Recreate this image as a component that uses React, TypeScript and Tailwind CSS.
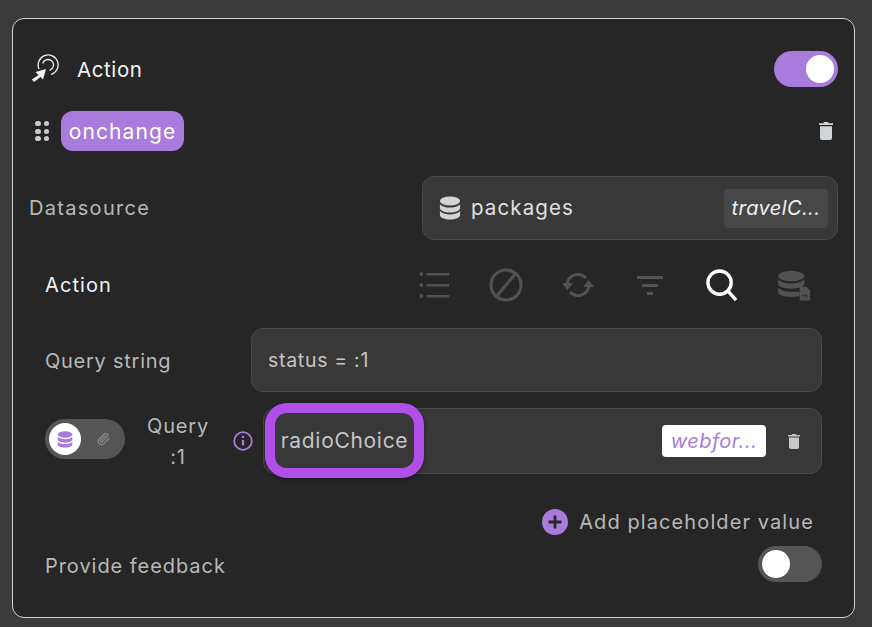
function DbIcon({ className }: { className?: string }) {
  return (
    <svg viewBox="0 0 24 24" className={className} fill="currentColor" preserveAspectRatio="none">
      <ellipse cx="12" cy="5" rx="11" ry="4.500" />
      <path d="M1 8.200C3 10.500 7.400 11.600 12 11.600s9-1.100 11-3.400V12c0 2.500-4.900 4.500-11 4.500S1 14.500 1 12z" />
      <path d="M1 15.100C3 17.400 7.400 18.500 12 18.500s9-1.100 11-3.400v3.900c0 2.500-4.900 4.500-11 4.500S1 21.500 1 19z" />
    </svg>
  );
}

function TrashIcon({ className }: { className?: string }) {
  return (
    <svg viewBox="0 0 14 18" className={className} fill="currentColor">
      <path d="M5 0h4l.6 1.200H14v1.800H0V1.200h4.400z" />
      <path d="M1 4.200h12V16a2 2 0 0 1-2 2H3a2 2 0 0 1-2-2z" />
    </svg>
  );
}

function ActionIcon() {
  return (
    <svg viewBox="0 0 30 30" className="w-[30px] h-[30px] text-[#f2f2f2]" fill="none" stroke="currentColor">
      <path d="M8 15A10 10 0 1 1 20 20.500" strokeWidth="1.300" />
      <path d="M11.700 9.500A5.500 5.500 0 1 1 18.500 16.300" strokeWidth="1.300" />
      <path d="M15 15 4.500 18l3 3-6.700 4.500L3 28l6.500-5 2.500 2.500z" fill="currentColor" stroke="none" />
    </svg>
  );
}

function Switch({ on }: { on: boolean }) {
  return (
    <div className={"w-16 h-9 rounded-full flex items-center px-1 " + (on ? "bg-[#a87bdd] justify-end" : "bg-[#555555] justify-start")}>
      <div className="w-7 h-7 rounded-full bg-white"></div>
    </div>
  );
}

export default function App() {
  return (
    <div className="w-[872px] h-[627px] bg-[#3a3a3a] pt-[18px] px-3 overflow-hidden font-['Inter',sans-serif]">
      <div className="w-[843px] h-[600px] bg-[#262626] border border-[#d4d4d4] rounded-xl pl-4 pr-4 relative">
        {/* Cabecera */}
        <div className="flex items-center justify-between h-9 mt-[32px] pl-[2px] pr-0">
          <div className="flex items-center gap-[16px]">
            <ActionIcon />
            <span className="text-[20.5px] tracking-[0.6px] text-[#f2f2f2] pt-[2px]">Action</span>
          </div>
          <Switch on />
        </div>

        {/* Evento */}
        <div className="flex items-center justify-between mt-[24px] h-10">
          <div className="flex items-center gap-[12px] pl-[6px]">
            <div className="grid grid-cols-2 gap-x-[3px] gap-y-[2.500px]">
              {[0, 1, 2, 3, 4, 5].map((i) => (
                <span key={i} className="w-[5.500px] h-[5px] rounded-full bg-[#cccccc]"></span>
              ))}
            </div>
            <div className="h-10 w-[123px] rounded-xl bg-[#a87bdd] text-white flex items-center justify-center text-[21px] tracking-[1.100px] pt-[2px]">onchange</div>
          </div>
          <TrashIcon className="w-[14px] h-[18px] text-[#d1d5db] mr-[5px]" />
        </div>

        {/* Datasource */}
        <div className="flex items-center justify-between mt-[25px]">
          <span className="text-[20px] tracking-[1.300px] text-[#b8b8b8]">Datasource</span>
          <div className="w-[416px] h-[64px] rounded-xl bg-[#383838] border border-[#4a4a4a] flex items-center justify-between pl-4 pr-[9px]">
            <div className="flex items-center gap-[10px]">
              <DbIcon className="w-[22px] h-[24px] text-[#d4d4d4]" />
              <span className="text-[20.500px] tracking-[1.100px] text-[#e0e0e0]">packages</span>
            </div>
            <div className="w-[104px] h-[39px] rounded bg-[#474747] flex items-center justify-center text-[20px] tracking-[0.400px] italic text-[#f0f0f0]">travelC...</div>
          </div>
        </div>

        {/* Action */}
        <div className="flex items-center justify-between mt-[27px] pl-4 pr-[27px] h-[36px]">
          <span className="text-[20px] tracking-[1.100px] text-[#f2f2f2]">Action</span>
          <div className="flex items-center text-[#525252]">
            <svg viewBox="0 0 34 30" className="w-[32px] h-[30px] mr-[40px]" fill="currentColor" preserveAspectRatio="none">
              <circle cx="3.500" cy="4" r="2" /><rect x="9" y="3" width="24" height="2.500" />
              <circle cx="3.500" cy="15" r="2" /><rect x="9" y="14" width="24" height="2.500" />
              <circle cx="3.500" cy="26" r="2" /><rect x="9" y="25" width="24" height="2.500" />
            </svg>
            <svg viewBox="0 0 34 34" className="w-[34px] h-[34px] mr-[39px] -ml-[1px]" fill="none" stroke="currentColor" strokeWidth="3">
              <circle cx="17" cy="17" r="15" /><path d="M7 29 27 5" />
            </svg>
            <svg viewBox="0 0 32 28" className="w-[32px] h-[28px] mr-[42px]" fill="none" stroke="currentColor" strokeWidth="3">
              <path d="M5 14A11 11 0 0 1 24 7" /><path d="M27 14A11 11 0 0 1 8 21" />
              <path d="M0 12h11l-5.500 7zM32 16H21l5.500-7z" fill="currentColor" stroke="none" />
            </svg>
            <svg viewBox="0 0 28 24" className="w-[28px] h-[24px] mr-[41px]" fill="currentColor">
              <rect x="1" y="3" width="26" height="3" /><rect x="6" y="11" width="16" height="3" /><rect x="11" y="19" width="6" height="3" />
            </svg>
            <svg viewBox="0 0 34 34" className="w-[33px] h-[33px] text-white mr-[39px]" fill="none" stroke="currentColor" strokeWidth="3.500">
              <circle cx="15" cy="14" r="12" /><path d="m24 23 8 9" />
            </svg>
            <svg viewBox="0 0 36 32" className="w-[34px] h-[31px]" fill="currentColor">
              <ellipse cx="15" cy="6" rx="14" ry="5.500" />
              <path d="M1 9.500c2.500 3 8 4.500 14 4.500s11.500-1.500 14-4.500V14c0 3-6.300 5.500-14 5.500S1 17 1 14z" />
              <path d="M1 18c2.500 3 8 4.500 14 4.500h9V27c-3 .6-6 1-9 1-7.700 0-14-2.500-14-5.500z" />
              <path d="M25 17h6l4 4v10a1 1 0 0 1-1 1h-9a1 1 0 0 1-1-1V18a1 1 0 0 1 1-1z" />
              <path d="M26 27h6m-2-2 2 2-2 2" fill="none" stroke="#262626" strokeWidth="1" />
            </svg>
          </div>
        </div>

        {/* Query string */}
        <div className="flex items-center justify-between mt-[25px] pl-4 pr-4">
          <span className="text-[20px] tracking-[0.750px] text-[#b8b8b8] pt-[2px]">Query string</span>
          <div className="w-[571px] h-[64px] rounded-xl bg-[#383838] border border-[#4a4a4a] flex items-center pl-4 pt-[2px] text-[19.500px] tracking-[0.700px] text-[#c4c4c4]">status = :1</div>
        </div>

        {/* Query :1 */}
        <div className="flex items-center mt-[16px] pl-4 pr-4">
          <div className="w-20 h-10 rounded-full bg-[#555555] flex items-center justify-between pl-[4px] pr-[14px] shrink-0 mb-[4px]">
            <div className="w-8 h-8 rounded-full bg-white flex items-center justify-center">
              <DbIcon className="w-[16px] h-[17px] text-[#a87bdd]" />
            </div>
            <svg viewBox="0 0 24 24" className="w-[14px] h-[14px] text-[#8a8a8a]" fill="none" stroke="currentColor" strokeWidth="2">
              <path d="m21 11-9 9a5.500 5.500 0 0 1-8-8l9-9a3.600 3.600 0 0 1 5 5l-9 9a1.800 1.800 0 0 1-2.500-2.500l8.500-8.500" />
            </svg>
          </div>
          <div className="w-[108px] text-center text-[20px] leading-[31px] tracking-[0.800px] text-[#b8b8b8] shrink-0 -ml-[1px] pt-[1px]">Query<br />:1</div>
          <svg viewBox="0 0 20 20" className="w-[20px] h-[20px] text-[#a87bdd] shrink-0 ml-[1px]" fill="none" stroke="currentColor" strokeWidth="1.800">
            <circle cx="10" cy="10" r="8.800" />
            <path d="M10 9v5.500" strokeWidth="2.200" />
            <circle cx="10" cy="6" r="1.300" fill="currentColor" stroke="none" />
          </svg>
          <div className="ml-[10px] w-[559px] h-[66px] rounded-xl bg-[#383838] border border-[#4a4a4a] flex items-center justify-between pr-[21px] relative">
            <div className="absolute left-[1px] -top-[6px] w-[159px] h-[75px] rounded-[22px] border-[10px] border-[#b14fea] bg-[#383838] flex items-center justify-center text-[21px] tracking-[0.700px] text-[#c4c4c4] shadow-[0_1px_4px_rgba(0,0,0,0.5)]">radioChoice</div>
            <div className="ml-auto flex items-center gap-[22px]">
              <div className="w-[104px] h-[32px] rounded bg-white flex items-center justify-center text-[20px] tracking-[0.500px] italic text-[#a87bdd]">webfor...</div>
              <TrashIcon className="w-[12px] h-[15px] text-[#c8c8c8]" />
            </div>
          </div>
        </div>

        {/* Add placeholder */}
        <div className="flex items-center justify-end gap-[11px] mt-[33px] pr-[24px]">
          <svg viewBox="0 0 26 26" className="w-[26px] h-[26px]">
            <circle cx="13" cy="13" r="13" fill="#a87bdd" />
            <path d="M13 6.500v13M6.500 13h13" stroke="#262626" strokeWidth="2.800" />
          </svg>
          <span className="text-[20px] tracking-[1.100px] text-[#b8b8b8]">Add placeholder value</span>
        </div>

        {/* Provide feedback */}
        <div className="flex items-center justify-between mt-[9px] pl-4 pr-4">
          <span className="text-[20px] tracking-[0.950px] text-[#b8b8b8] pt-[4px]">Provide feedback</span>
          <Switch on={false} />
        </div>
      </div>
    </div>
  );
}
